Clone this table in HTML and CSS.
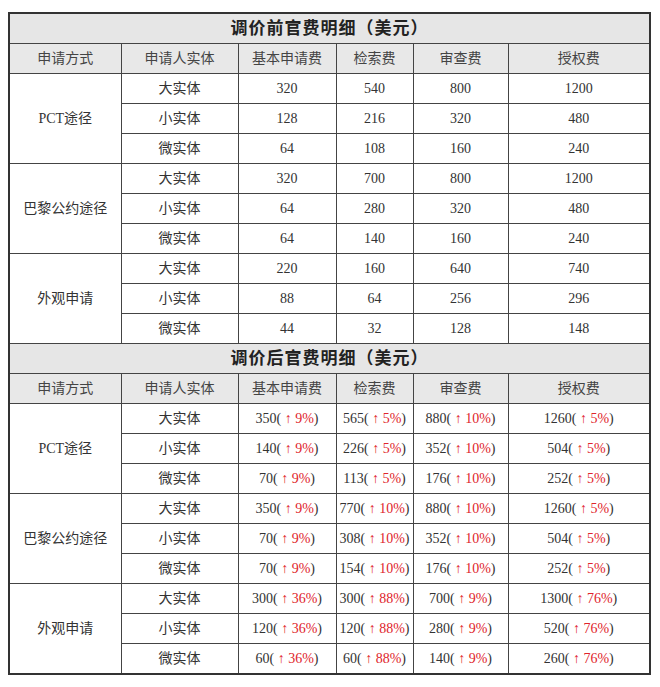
FILE: index.html
```html
<!DOCTYPE html>
<html lang="zh">
<head>
<meta charset="utf-8">
<link rel="stylesheet" href="styles.css">
</head>
<body>
<table class="fees">
  <colgroup>
    <col class="c1"><col class="c2"><col class="c3"><col class="c4"><col class="c5"><col class="c6">
  </colgroup>
  <tbody>
    <tr class="title"><td colspan="6">调价前官费明细（美元）</td></tr>
    <tr class="head"><td>申请方式</td><td>申请人实体</td><td>基本申请费</td><td>检索费</td><td>审查费</td><td>授权费</td></tr>
    <tr><td rowspan="3" class="route">PCT途径</td><td>大实体</td><td>320</td><td>540</td><td>800</td><td>1200</td></tr>
    <tr><td>小实体</td><td>128</td><td>216</td><td>320</td><td>480</td></tr>
    <tr><td>微实体</td><td>64</td><td>108</td><td>160</td><td>240</td></tr>
    <tr><td rowspan="3" class="route">巴黎公约途径</td><td>大实体</td><td>320</td><td>700</td><td>800</td><td>1200</td></tr>
    <tr><td>小实体</td><td>64</td><td>280</td><td>320</td><td>480</td></tr>
    <tr><td>微实体</td><td>64</td><td>140</td><td>160</td><td>240</td></tr>
    <tr><td rowspan="3" class="route">外观申请</td><td>大实体</td><td>220</td><td>160</td><td>640</td><td>740</td></tr>
    <tr><td>小实体</td><td>88</td><td>64</td><td>256</td><td>296</td></tr>
    <tr><td>微实体</td><td>44</td><td>32</td><td>128</td><td>148</td></tr>

    <tr class="title"><td colspan="6">调价后官费明细（美元）</td></tr>
    <tr class="head"><td>申请方式</td><td>申请人实体</td><td>基本申请费</td><td>检索费</td><td>审查费</td><td>授权费</td></tr>
    <tr><td rowspan="3" class="route">PCT途径</td><td>大实体</td><td>350( <span class="up">↑ 9%</span>)</td><td>565( <span class="up">↑ 5%</span>)</td><td>880( <span class="up">↑ 10%</span>)</td><td>1260( <span class="up">↑ 5%</span>)</td></tr>
    <tr><td>小实体</td><td>140( <span class="up">↑ 9%</span>)</td><td>226( <span class="up">↑ 5%</span>)</td><td>352( <span class="up">↑ 10%</span>)</td><td>504( <span class="up">↑ 5%</span>)</td></tr>
    <tr><td>微实体</td><td>70( <span class="up">↑ 9%</span>)</td><td>113( <span class="up">↑ 5%</span>)</td><td>176( <span class="up">↑ 10%</span>)</td><td>252( <span class="up">↑ 5%</span>)</td></tr>
    <tr><td rowspan="3" class="route">巴黎公约途径</td><td>大实体</td><td>350( <span class="up">↑ 9%</span>)</td><td>770( <span class="up">↑ 10%</span>)</td><td>880( <span class="up">↑ 10%</span>)</td><td>1260( <span class="up">↑ 5%</span>)</td></tr>
    <tr><td>小实体</td><td>70( <span class="up">↑ 9%</span>)</td><td>308( <span class="up">↑ 10%</span>)</td><td>352( <span class="up">↑ 10%</span>)</td><td>504( <span class="up">↑ 5%</span>)</td></tr>
    <tr><td>微实体</td><td>70( <span class="up">↑ 9%</span>)</td><td>154( <span class="up">↑ 10%</span>)</td><td>176( <span class="up">↑ 10%</span>)</td><td>252( <span class="up">↑ 5%</span>)</td></tr>
    <tr><td rowspan="3" class="route">外观申请</td><td>大实体</td><td>300( <span class="up">↑ 36%</span>)</td><td>300( <span class="up">↑ 88%</span>)</td><td>700( <span class="up">↑ 9%</span>)</td><td>1300( <span class="up">↑ 76%</span>)</td></tr>
    <tr><td>小实体</td><td>120( <span class="up">↑ 36%</span>)</td><td>120( <span class="up">↑ 88%</span>)</td><td>280( <span class="up">↑ 9%</span>)</td><td>520( <span class="up">↑ 76%</span>)</td></tr>
    <tr><td>微实体</td><td>60( <span class="up">↑ 36%</span>)</td><td>60( <span class="up">↑ 88%</span>)</td><td>140( <span class="up">↑ 9%</span>)</td><td>260( <span class="up">↑ 76%</span>)</td></tr>
  </tbody>
</table>
</body>
</html>
```

FILE: styles.css
```css
html, body {
  background: #ffffff;
}
body {
  margin: 12px 0 0 8px;
  font-family: "Liberation Serif", "Noto Sans CJK SC", serif;
  color: #333333;
}
.fees {
  border-collapse: collapse;
  table-layout: fixed;
  width: 641px;
  border: 2px solid #333333;
}
.c1 { width: 112px; }
.c2 { width: 117px; }
.c3 { width: 98px; }
.c4 { width: 77px; }
.c5 { width: 95px; }
.c6 { width: 142px; }
.fees td {
  border: 1px solid #444444;
  height: 29px;
  padding: 0;
  text-align: center;
  vertical-align: middle;
  font-size: 14px;
  line-height: 16px;
  white-space: nowrap;
}
.fees .title td {
  background: #e6e6e6;
  font-size: 17px;
  font-weight: bold;
  color: #222222;
  letter-spacing: 1px;
}
.fees .head td {
  background: #e8e8e8;
  color: #444444;
}
.up {
  color: #e0242b;
}
```
